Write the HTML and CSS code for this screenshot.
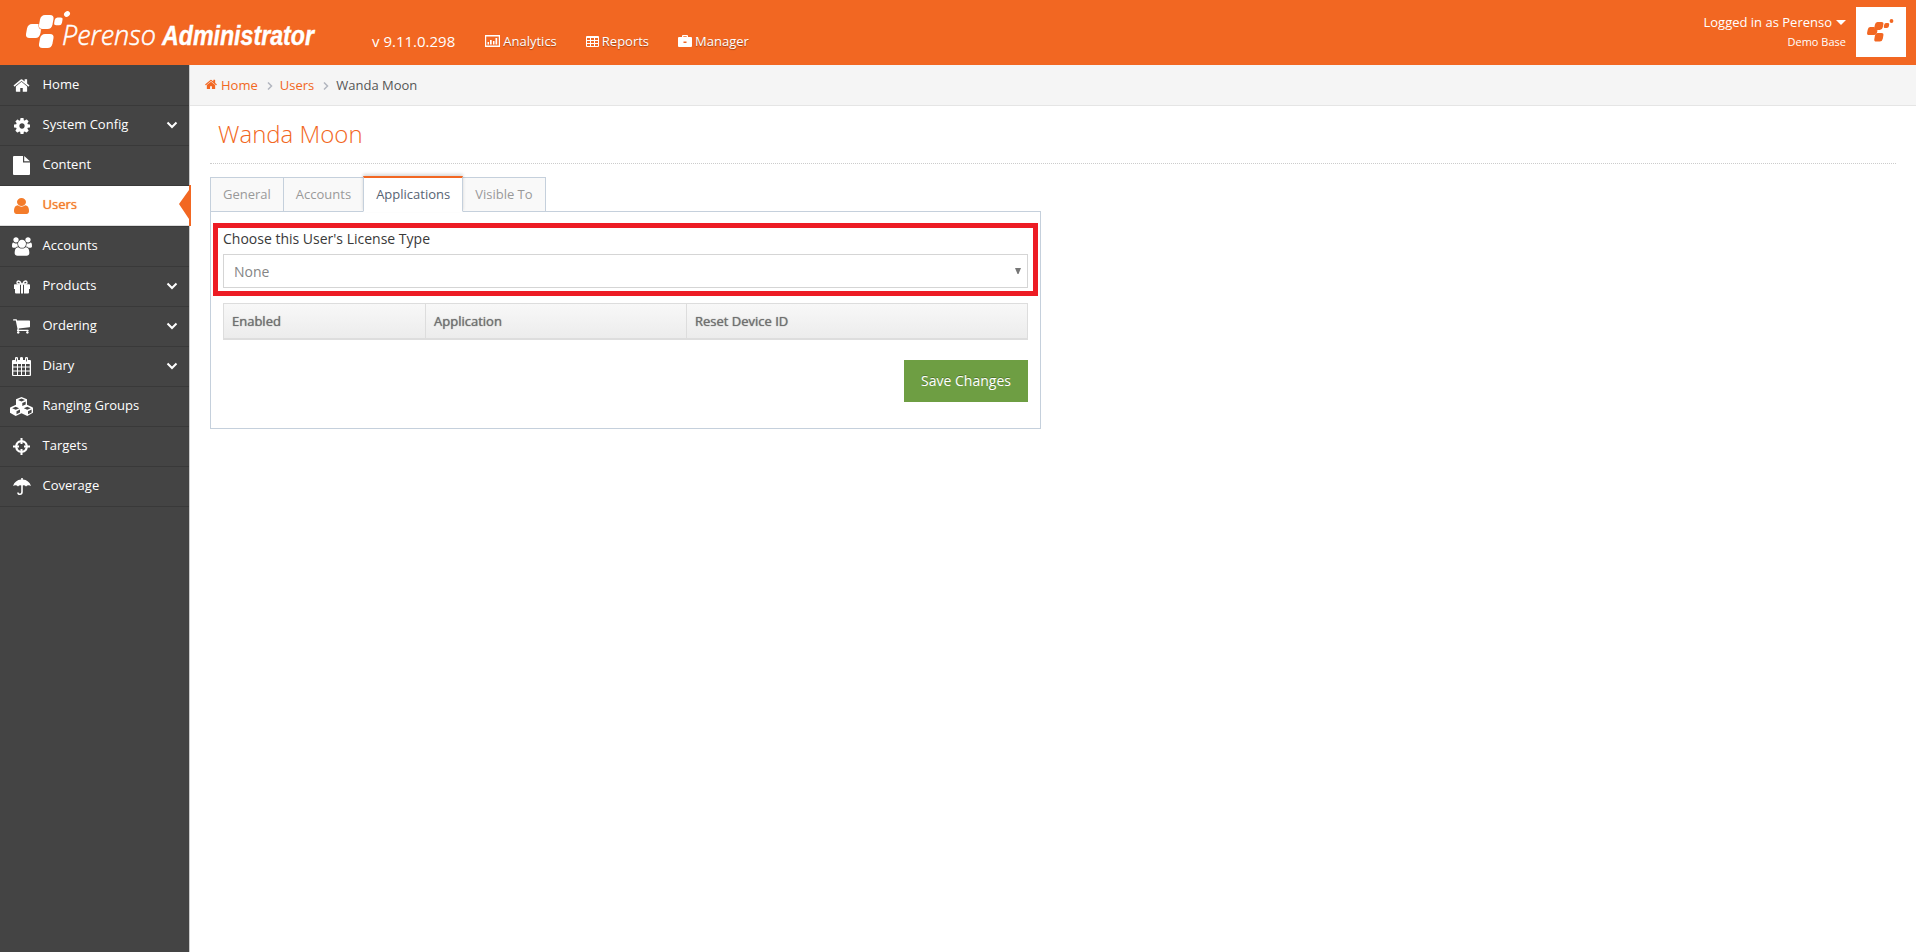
FILE: index.html
```html
<!DOCTYPE html>
<html lang="en">
<head>
  <meta charset="UTF-8" />
  <meta name="viewport" content="width=device-width, initial-scale=1.0"/>
  <title>Perenso Administrator</title>
  <link rel="stylesheet" href="styles.css">
</head>
<body>

  <header class="header">
    <svg class="logo" width="300" height="65" viewBox="0 0 300 65">
      <g fill="#fff">
        <path d="M45 15h5q4 0 3.500 4l-1 5.500q-1 4.500-5 4.500h-5q-4 0-3.500-4l1-5.500q1-4.500 5-4.500z"/>
        <path d="M32 24h6.500v1.500q0 4 3.500 4h-1l-.5 3.500q-1 5-5 5h-6q-4 0-3.500-4l1-5.500q1-4.500 5-4.500z"/>
        <path d="M45 34h5q4 0 3.500 4l-1 5.500q-1 4.500-5 4.500h-5q-4 0-3.500-4l1-5.500q1-4.500 5-4.500z"/>
        <path d="M57.500 17.500h3q2.500 0 2 2.300l-.5 3q-.5 2.500-2.800 2.500h-3q-2.500 0-2-2.500l.5-2.800q.5-2.500 2.800-2.500z"/>
        <ellipse cx="67" cy="14" rx="3.200" ry="2.600" transform="rotate(-40 67 14)"/>
      </g>
      <text class="logo-name" x="62" y="44.500" textLength="94" lengthAdjust="spacingAndGlyphs">Perenso</text>
      <text class="logo-product" x="162" y="44.500" textLength="152" lengthAdjust="spacingAndGlyphs">Administrator</text>
    </svg>
    <span class="version">v 9.11.0.298</span>
    <nav class="top-nav">
      <a class="top-link">
        <svg width="15" height="12" viewBox="0 0 15 12"><path fill="#fff" fill-rule="evenodd" d="M0 0h15v12H0zM1.200 1.500v9h12.600v-9zM2.500 7h1.500v2.500H2.500zM5 5h1.700v4.500H5zM8 6h1.500v3.500H8zM10.500 3h1.700v6.500h-1.700z"/></svg>
        Analytics
      </a>
      <a class="top-link">
        <svg width="13" height="11" viewBox="0 0 13 11"><path fill="#fff" fill-rule="evenodd" d="M1 0h11q1 0 1 1v9q0 1-1 1H1q-1 0-1-1V1q0-1 1-1zM1 2v2h3V2zM5 2v2h3V2zM9 2v2h3V2zM1 5v2h3V5zM5 5v2h3V5zM9 5v2h3V5zM1 8v2h3V8zM5 8v2h3V8zM9 8v2h3V8z"/></svg>
        Reports
      </a>
      <a class="top-link">
        <svg width="14" height="12" viewBox="0 0 14 12"><path fill="#fff" fill-rule="evenodd" d="M4 2V1q0-1 1-1h4q1 0 1 1v1h3q1 0 1 1v8q0 1-1 1H1q-1 0-1-1V3q0-1 1-1zM5.300 1.200V2h3.400v-.8zM5.500 6.500v1.500h3V6.500z"/></svg>
        Manager
      </a>
    </nav>
    <div class="account">
      <div class="account-name">Logged in as Perenso <span class="caret"></span></div>
      <div class="account-base">Demo Base</div>
    </div>
    <div class="avatar">
      <svg width="50" height="50" viewBox="0 0 50 50">
        <g fill="#f26722">
          <path d="M21.500 15h4q2.300 0 1.900 2.300l-.6 3q-.5 2.700-3 2.700h-3.600q-2.300 0-1.900-2.300l.6-3q.5-2.700 2.600-2.700z"/>
          <path d="M14 20h4.500q0 3 3 3.200-.3 4.800-3.500 4.800h-5q-2.300 0-1.900-2.300l.6-3q.5-2.700 2.300-2.700z"/>
          <path d="M21.500 26h4q2.300 0 1.900 2.300l-.6 3.500q-.5 2.700-3 2.700h-3.600q-2.300 0-1.900-2.300l.6-3.500q.5-2.700 2.600-2.700z"/>
          <path d="M30 16h2q1.500 0 1.200 1.500l-.3 1.700q-.4 1.800-2 1.800H29q-1.400 0-1.200-1.500l.3-1.500q.4-2 1.900-2z"/>
          <circle cx="35.500" cy="14" r="1.900"/>
        </g>
      </svg>
    </div>
  </header>

  <div class="page">
    <ul class="sidebar">
      <li class="menu-item">
        <span class="menu-icon"><svg width="17" height="15" viewBox="0 128 1664 1536"><path d="M1408 992v480q0 26-19 45t-45 19h-384v-384h-256v384h-384q-26 0-45-19t-19-45v-480q0-1 .5-3t.5-3l575-474 575 474q1 2 1 6zm223-69l-62 74q-8 9-21 11h-3q-13 0-21-7l-692-577-692 577q-12 8-24 7-13-2-21-11l-62-74q-8-10-7-23.500t11-21.500l719-599q32-26 76-26t76 26l244 204v-195q0-14 9-23t23-9h192q14 0 23 9t9 23v408l219 182q10 8 11 21.500t-7 23.500z"/></svg></span>
        <span class="menu-label">Home</span>
      </li>
      <li class="menu-item">
        <span class="menu-icon"><svg width="16" height="16" viewBox="0 128 1536 1536"><path d="M1024 896q0-106-75-181t-181-75-181 75-75 181 75 181 181 75 181-75 75-181zm512-109v222q0 12-8 23t-20 13l-185 28q-19 54-39 91 35 50 107 138 10 12 10 25t-9 23q-27 37-99 108t-94 71q-12 0-26-9l-138-108q-44 23-91 38-16 136-29 186-7 28-36 28h-222q-14 0-24.500-8.500t-11.500-21.500l-28-184q-49-16-90-37l-141 107q-10 9-25 9-14 0-25-11-126-114-165-168-7-10-7-23 0-12 8-23 15-21 51-66.500t54-70.500q-27-50-41-99l-183-27q-13-2-21-12.500t-8-23.500v-222q0-12 8-23t19-13l186-28q14-46 39-92-40-57-107-138-10-12-10-24 0-10 9-23 26-36 98.500-107.500t94.500-71.500q13 0 26 10l138 107q44-23 91-38 16-136 29-186 7-28 36-28h222q14 0 24.500 8.500t11.500 21.500l28 184q49 16 90 37l142-107q9-9 24-9 13 0 25 10 129 119 165 170 7 8 7 22 0 12-8 23-15 21-51 66.500t-54 70.500q26 50 41 98l183 28q13 2 21 12.500t8 23.500z"/></svg></span>
        <span class="menu-label">System Config</span>
        <svg class="chevron" width="12" height="8" viewBox="0 0 12 8"><path d="M1.500 1.500L6 6l4.500-4.500"/></svg>
      </li>
      <li class="menu-item">
        <span class="menu-icon"><svg width="17" height="19" viewBox="0 0 17 19"><path d="M1 0h9v6.500h7V18q0 1-1 1H1q-1 0-1-1V1q0-1 1-1zM11.200 0L17 5.300h-5.800z"/></svg></span>
        <span class="menu-label">Content</span>
      </li>
      <li class="menu-item active">
        <span class="menu-icon"><svg width="15" height="16" viewBox="256 128 1280 1536" preserveAspectRatio="none"><path d="M1536 1399q0 109-62.500 187t-150.500 78h-854q-88 0-150.500-78t-62.500-187q0-85 8.500-160.500t31.500-152 58.500-131 94-89 134.500-34.500q131 128 313 128t313-128q76 0 134.500 34.500t94 89 58.500 131 31.500 152 8.500 160.500zm-256-887q0 159-112.500 271.500t-271.500 112.500-271.500-112.500-112.500-271.500 112.500-271.500 271.500-112.500 271.500 112.500 112.500 271.500z"/></svg></span>
        <span class="menu-label">Users</span>
        <svg class="notch" width="12" height="41" viewBox="0 0 12 41"><path d="M10 0h2v41h-2v-7L0 19 10 5z"/></svg>
      </li>
      <li class="menu-item">
        <span class="menu-icon"><svg width="20" height="19" viewBox="0 0 1920 1792"><path d="M593 896q-162 5-265 128h-134q-82 0-138-40.500t-56-118.500q0-353 124-353 6 0 43.500 21t97.500 42.500 119 21.500q67 0 133-23-5 37-5 66 0 139 81 256zm1071 637q0 120-73 189.500t-194 69.500h-874q-121 0-194-69.500t-73-189.500q0-53 3.500-103.500t14-109 26.500-108.500 43-97.500 62-81 85.500-53.500 111.500-20q10 0 43 21.500t73 48 107 48 135 21.500 135-21.500 107-48 73-48 43-21.500q61 0 111.500 20t85.500 53.500 62 81 43 97.500 26.500 108.500 14 109 3.500 103.500zm-1024-1277q0 106-75 181t-181 75-181-75-75-181 75-181 181-75 181 75 75 181zm704 384q0 159-112.500 271.500t-271.500 112.500-271.500-112.500-112.500-271.500 112.500-271.500 271.500-112.500 271.500 112.500 112.500 271.500zm576 225q0 78-56 118.500t-138 40.500h-134q-103-123-265-128 81-117 81-256 0-29-5-66 66 23 133 23 59 0 119-21.500t97.500-42.500 43.500-21q124 0 124 353zm-128-609q0 106-75 181t-181 75-181-75-75-181 75-181 181-75 181 75 75 181z"/></svg></span>
        <span class="menu-label">Accounts</span>
      </li>
      <li class="menu-item">
        <span class="menu-icon"><svg width="16" height="14" viewBox="0 0 16 14"><path d="M0 5q0-.8.800-.8H6V13.500H2q-1 0-1-1V9H0zM7 4.200h2v9.300H7zM10 4.200h5.200q.8 0 .8.800v4h-1v3.500q0 1-1 1h-4z"/><path class="line" d="M7.500 4Q6 1 4.500 1T3 2.500 4.500 4zM8.500 4Q10 1 11.500 1T13 2.500 11.500 4z"/></svg></span>
        <span class="menu-label">Products</span>
        <svg class="chevron" width="12" height="8" viewBox="0 0 12 8"><path d="M1.500 1.500L6 6l4.500-4.500"/></svg>
      </li>
      <li class="menu-item">
        <span class="menu-icon"><svg width="17" height="15" viewBox="64 256 1664 1408"><path d="M704 1536q0 52-38 90t-90 38-90-38-38-90 38-90 90-38 90 38 38 90zm896 0q0 52-38 90t-90 38-90-38-38-90 38-90 90-38 90 38 38 90zm128-1088v512q0 24-16.500 42.500t-40.500 21.500l-1044 122q13 60 13 70 0 16-24 64h920q26 0 45 19t19 45-19 45-45 19h-1024q-26 0-45-19t-19-45q0-11 8-31.500t16-36 21.500-40 15.500-29.500l-177-823h-204q-26 0-45-19t-19-45 19-45 45-19h256q16 0 28.500 6.500t19.500 15.500 13 24.500 8 26 5.500 29.500 4.500 26h1201q26 0 45 19t19 45z"/></svg></span>
        <span class="menu-label">Ordering</span>
        <svg class="chevron" width="12" height="8" viewBox="0 0 12 8"><path d="M1.500 1.500L6 6l4.500-4.500"/></svg>
      </li>
      <li class="menu-item">
        <span class="menu-icon"><svg width="19" height="19" viewBox="0 0 19 19"><path fill-rule="evenodd" d="M1 3h2V1q0-1 1.500-1T6 1v2h2V1q0-1 1.500-1T11 1v2h2V1q0-1 1.500-1T16 1v2h2q1 0 1 1v14q0 1-1 1H1q-1 0-1-1V4q0-1 1-1zM1.300 7v2.500H5V7zM6 7v2.500h3V7zM10 7v2.500h3V7zM14 7v2.500h3.700V7zM1.300 10.500v3H5v-3zM6 10.500v3h3v-3zM10 10.500v3h3v-3zM14 10.500v3h3.700v-3zM1.300 14.500V18H5v-3.500zM6 14.500V18h3v-3.500zM10 14.500V18h3v-3.500zM14 14.500V18h3.700v-3.500zM4.200 1.500v3h.8v-3zM14 1.500v3h.8v-3z"/></svg></span>
        <span class="menu-label">Diary</span>
        <svg class="chevron" width="12" height="8" viewBox="0 0 12 8"><path d="M1.500 1.500L6 6l4.500-4.500"/></svg>
      </li>
      <li class="menu-item">
        <span class="menu-icon"><svg width="23" height="19" viewBox="0 0 23 19"><path fill-rule="evenodd" d="M11.500 0L17 2.200v5.500l5.500 2.500q.5.300.5 1v4.500L17.300 19l-5.800-2.700L5.700 19 0 15.700v-4.500q0-.7.500-1L6 7.700V2.200zM11.500 1.500L8 3l3.500 1.500L15 3zM12.300 6v3L15.700 7.500v-3zM5.700 9.700L2.200 11.200l3.500 1.500 3.500-1.500zM6.500 14.200v3L10 15.500v-3zM17.300 9.700l-3.500 1.500 3.500 1.500 3.500-1.500zM18 14.200v3l3.600-1.700v-3z"/></svg></span>
        <span class="menu-label">Ranging Groups</span>
      </li>
      <li class="menu-item">
        <span class="menu-icon"><svg width="17" height="17" viewBox="0 0 17 17"><path fill-rule="evenodd" d="M7.500 0h2v2.200a6.400 6.400 0 0 1 5.300 5.300H17v2h-2.200a6.400 6.400 0 0 1-5.300 5.300V17h-2v-2.200a6.400 6.400 0 0 1-5.300-5.300H0v-2h2.200a6.400 6.400 0 0 1 5.300-5.300zM7.500 4.300a4.400 4.400 0 0 0-3.200 3.200H6v2H4.300a4.400 4.400 0 0 0 3.200 3.200V11h2v1.700a4.400 4.400 0 0 0 3.200-3.200H11v-2h1.700a4.400 4.400 0 0 0-3.200-3.200V6h-2z"/></svg></span>
        <span class="menu-label">Targets</span>
      </li>
      <li class="menu-item">
        <span class="menu-icon"><svg width="18" height="17" viewBox="0 0 18 17"><path d="M8.200 0h1.600v1.500Q16 2 18 8q-1-.8-2.500-.8T13 8.500q-1-1.300-2.300-1.300-.6 0-.9.300V14q0 3-2.800 3t-2.800-2.600h1.500Q5.900 15.600 7 15.600T8.200 14V7.500q-.3-.3-.9-.3Q6 7.200 5 8.500 4 7.200 2.500 7.200T0 8q2-6 8.200-6.500z"/></svg></span>
        <span class="menu-label">Coverage</span>
      </li>
    </ul>

    <main class="content">
      <div class="breadcrumb">
        <svg width="12" height="11" viewBox="0 200 1664 1400"><path fill="#f26722" d="M1408 992v480q0 26-19 45t-45 19h-384v-384h-256v384h-384q-26 0-45-19t-19-45v-480q0-1 .5-3t.5-3l575-474 575 474q1 2 1 6zm223-69l-62 74q-8 9-21 11h-3q-13 0-21-7l-692-577-692 577q-12 8-24 7-13-2-21-11l-62-74q-8-10-7-23.500t11-21.500l719-599q32-26 76-26t76 26l244 204v-195q0-14 9-23t23-9h192q14 0 23 9t9 23v408l219 182q10 8 11 21.500t-7 23.500z"/></svg>
        <a class="crumb-link">Home</a>
        <svg class="crumb-arrow" width="6" height="8" viewBox="0 0 6 8"><path d="M1 .5L4.500 4 1 7.500"/></svg>
        <a class="crumb-link">Users</a>
        <svg class="crumb-arrow" width="6" height="8" viewBox="0 0 6 8"><path d="M1 .5L4.500 4 1 7.500"/></svg>
        <span>Wanda Moon</span>
      </div>

      <div class="page-content">
        <h1>Wanda Moon</h1>

        <ul class="tabs">
          <li class="tab">General</li>
          <li class="tab">Accounts</li>
          <li class="tab selected">Applications</li>
          <li class="tab">Visible To</li>
        </ul>

        <div class="tab-panel">
          <div class="license">
            <label>Choose this User's License Type</label>
            <div class="select">
              <span>None</span>
              <svg width="6" height="6" viewBox="0 0 6 6"><path fill="#777" d="M0 0h6L3.500 6h-1z"/></svg>
            </div>
          </div>

          <table class="apps">
            <tr>
              <th class="col-enabled">Enabled</th>
              <th class="col-app">Application</th>
              <th>Reset Device ID</th>
            </tr>
          </table>

          <div class="actions">
            <button class="save">Save Changes</button>
          </div>
        </div>
      </div>
    </main>
  </div>

</body>
</html>
```

FILE: styles.css
```css
* { margin: 0; padding: 0; box-sizing: border-box; }

body {
  font-family: 'Open Sans', sans-serif;
  font-size: 13px;
  color: #393939;
  background-color: #fff;
  min-height: 100vh;
  display: flex;
  flex-direction: column;
}

ul { list-style: none; }
svg { display: block; flex: none; }

/* Header */
.header {
  height: 65px;
  background-color: #f26722;
  color: #fff;
  display: flex;
  align-items: flex-start;
  padding-right: 10px;
}

.logo {
  overflow: visible;
}

.logo-name {
  font-family: 'Open Sans', sans-serif;
  font-size: 27px;
  font-weight: 300;
  font-style: italic;
  fill: #fff;
  stroke: #fff;
  stroke-width: 0.5;
}

.logo-product {
  font-family: 'Liberation Sans', sans-serif;
  font-size: 27px;
  font-weight: bold;
  font-style: italic;
  fill: #fff;
  stroke: #fff;
  stroke-width: 0.4;
}

.version {
  font-size: 15px;
  line-height: 20px;
  margin-left: 72px;
  padding-top: 31px;
}

.top-nav {
  display: flex;
  gap: 29px;
  margin-left: 30px;
  padding-top: 31px;
}

.top-link {
  display: flex;
  align-items: center;
  gap: 3px;
  line-height: 20px;
  text-shadow: 0 1px 1px rgba(0, 0, 0, 0.35);
}

.account {
  margin-left: auto;
  margin-right: 10px;
  padding-top: 13px;
  text-align: right;
}

.account-name {
  display: flex;
  align-items: center;
  gap: 4px;
  line-height: 18px;
}

.caret {
  border: 5px solid transparent;
  border-top-color: #fff;
  border-bottom: 0;
}

.account-base {
  font-size: 11px;
  line-height: 22px;
}

.avatar {
  width: 50px;
  height: 50px;
  margin-top: 7px;
  background-color: #fff;
}

.page {
  flex: 1;
  display: flex;
}

/* Sidebar */
.sidebar {
  width: 190px;
  background-color: #444;
  border-right: 1px solid #ccc;
}

.menu-item {
  height: 40px;
  display: flex;
  align-items: center;
  position: relative;
  border-top: 1px solid #393939;
  color: #fff;
}

.menu-item:first-child { border-top-color: #444; }

.menu-item:last-child {
  height: 41px;
  border-bottom: 1px solid #393939;
}

.menu-item.active {
  height: 41px;
  background-color: #fff;
  border-bottom: 1px solid #ddd;
  color: #f47c2a;
  text-shadow: 0 0 1px #f47c2a;
}

.menu-icon {
  width: 42.5px;
  padding-left: 1px;
  display: flex;
  justify-content: center;
}

.menu-icon svg { fill: currentColor; }

.menu-icon .line {
  fill: none;
  stroke: currentColor;
  stroke-width: 1.3;
}

.menu-label {
  flex: 1;
  line-height: 36px;
  padding-bottom: 3px;
}

.chevron {
  margin-right: 11px;
  margin-bottom: 1px;
  fill: none;
  stroke: #fff;
  stroke-width: 2;
}

.notch {
  position: absolute;
  right: -2px;
  top: -1px;
  fill: #f26722;
}

/* Content */
.content { flex: 1; }

.breadcrumb {
  height: 41px;
  padding-left: 15px;
  padding-bottom: 1px;
  display: flex;
  align-items: center;
  background-color: #f5f5f5;
  border-bottom: 1px solid #e5e5e5;
  color: #555;
}

.crumb-link {
  color: #f26722;
  margin-left: 4px;
}

.crumb-arrow {
  margin: 2px 7px 0 9px;
  fill: none;
  stroke: #b2b6bf;
  stroke-width: 1.5;
}

.crumb-arrow + .crumb-link { margin-left: 0; }

.page-content { padding: 12px 20px 0; }

h1 {
  height: 46px;
  padding-left: 8px;
  font-size: 24px;
  font-weight: 300;
  line-height: 31px;
  color: #f26722;
  border-bottom: 1px dotted #ccc;
}

/* Tabs */
.tabs {
  display: flex;
  align-items: flex-end;
  height: 48px;
  position: relative;
  margin-bottom: -1px;
}

.tab {
  height: 35px;
  padding: 0 12px;
  line-height: 33px;
  background-color: #f9f9f9;
  border: 1px solid #c5d0dc;
  margin-right: -1px;
  color: #999;
}

.tab.selected {
  height: 36px;
  position: relative;
  background-color: #fff;
  border-top: 2px solid #f26722;
  border-bottom-color: #fff;
  color: #576373;
  box-shadow: 0 -2px 3px rgba(0, 0, 0, 0.15);
}

.tab-panel {
  width: 831px;
  height: 218px;
  padding: 11px 2px 0;
  border: 1px solid #c5d0dc;
}

.license {
  width: 825px;
  height: 73px;
  padding: 0 5px;
  border: 5px solid #ed1c24;
}

.license label {
  display: block;
  height: 26px;
  font-size: 14px;
  line-height: 22px;
  color: #393939;
}

.select {
  height: 34px;
  display: flex;
  align-items: center;
  justify-content: space-between;
  padding: 0 6px 0 10px;
  border: 1px solid #d5d5d5;
  font-size: 14px;
  color: #858585;
}

.apps {
  width: 805px;
  height: 37px;
  margin: 7px 0 0 10px;
  border-spacing: 0;
  table-layout: fixed;
  background: linear-gradient(#f8f8f8, #ececec);
  border: 1px solid #ddd;
  border-bottom-width: 2px;
}

.apps th {
  padding: 0 8px;
  text-align: left;
  font-weight: 400;
  color: #707070;
  text-shadow: 0 0 1px #707070;
}

.apps th + th { border-left: 1px solid #ddd; }

.col-enabled { width: 201px; }
.col-app { width: 261px; }

.actions {
  display: flex;
  justify-content: flex-end;
  padding: 20px 10px 0 0;
}

.save {
  width: 124px;
  height: 42px;
  padding-bottom: 2px;
  border: 0;
  background-color: #6e9e43;
  color: #fff;
  font-family: inherit;
  font-size: 14px;
  text-shadow: 0 -1px 0 rgba(0, 0, 0, 0.25);
}
```
